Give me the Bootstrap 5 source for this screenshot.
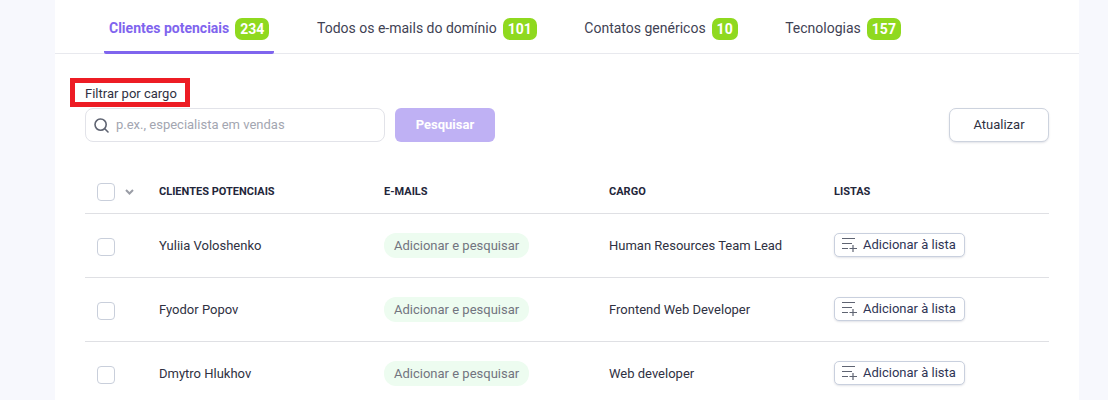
<!DOCTYPE html>
<html lang="pt">
<head>
<meta charset="utf-8">
<title>Clientes potenciais</title>
<link href="https://cdn.jsdelivr.net/npm/bootstrap@5.3.0/dist/css/bootstrap.min.css" rel="stylesheet">
<style>
html,body{height:100vh;overflow:hidden}
body{background:#f7f8fd;font-family:Roboto,"Liberation Sans",sans-serif;font-size:13px;color:#2f3142}
.panel{margin:0 29px 0 55px;background:#fff;height:100vh}
.tabbar{height:54px;border-bottom:1px solid #e8e9ee;padding-left:49px;gap:37.5px}
.tabitem{height:54px;padding:0 5px;display:flex;align-items:center;gap:6px;font-size:14px;color:#3f4254;text-decoration:none;margin-top:1px}
.tabitem.on{color:#7f65ee;font-weight:700;border-bottom:3px solid #7f65ee;border-radius:0 0 2px 2px;padding-top:5px;margin-top:0;width:170px;margin-right:.5px;white-space:nowrap}
.count{background:#8fd91f;color:#fff;font-weight:700;font-size:14px;border-radius:7px;height:22px;padding:0 5px;line-height:22px;margin-top:2px}
.body-area{padding:24px 30px 0}
.jobflag{display:block;width:120px;height:29px;margin-left:-15px;border:5px solid #ed1c24;padding-left:10px;line-height:21px;font-size:13px;color:#2f3142;margin-bottom:1px}
.searchbox{width:300px;height:34px;border:1px solid #e2e3e9;border-radius:8px;padding:0 8px;gap:7px}
.searchbox input{border:0;outline:0;flex:1;font-size:13px;color:#333;padding:0;min-width:0}
.searchbox input::placeholder{color:#a3a6b1;opacity:1}
.go{width:100px;height:34px;background:#bfb1f4;border:0;border-radius:6px;color:#fff;font-weight:700;font-size:13px;padding:0;margin-left:10px}
.refresh{width:100px;height:34px;background:#fff;border:1px solid #cdd3de;border-radius:7px;color:#2f3142;font-size:13px;padding:0;box-shadow:0 1px 2px rgba(60,70,100,.15)}
.leads{table-layout:fixed;width:100%;margin-top:28px;margin-bottom:0;font-size:13px}
.leads th,.leads td{padding:0;vertical-align:middle;border-bottom:1px solid #dfe0e4;color:#2f3142;box-shadow:none}
.leads td{padding-top:2px}
.leads thead tr{height:43px}
.leads thead th{font-size:11px;font-weight:700;text-transform:uppercase;color:#23263a;padding-top:1px}
.leads tbody tr{height:64px}
.leads .c0{width:74px}
.leads .c1,.leads .c2,.leads .c3{width:225px}
.tick{display:inline-block;width:18px;height:18px;border:1px solid #c9cfdb;border-radius:4px;margin-left:12px;vertical-align:middle;background:#fff}
.leads td .findpill{margin-bottom:2px}
.caret{display:inline-block;margin-left:10px;vertical-align:middle}
.findpill{display:inline-block;background:#edfcf0;color:#72747f;border-radius:12px;height:25px;line-height:25px;padding:0 10px}
.addlist{display:inline-flex;align-items:center;gap:6px;width:131px;height:24px;border:1px solid #c9d0de;border-radius:5px;background:#fff;padding:0 0 0 7px;font-size:13px;color:#2f3555;box-shadow:0 1px 2px rgba(60,70,100,.15);margin-top:-2px}
</style>
</head>
<body>
<div class="panel">
  <nav class="tabbar d-flex align-items-start">
    <a class="tabitem on" href="#">Clientes potenciais <span class="count">234</span></a>
    <a class="tabitem" href="#">Todos os e-mails do domínio <span class="count">101</span></a>
    <a class="tabitem" href="#">Contatos genéricos <span class="count">10</span></a>
    <a class="tabitem" href="#">Tecnologias <span class="count">157</span></a>
  </nav>
  <div class="body-area">
    <label class="jobflag" for="job">Filtrar por cargo</label>
    <div class="d-flex align-items-center">
      <div class="searchbox d-flex align-items-center">
        <svg width="15" height="15" viewBox="0 0 15 15" fill="none" stroke="#5f6472" stroke-width="1.6" stroke-linecap="round"><circle cx="6.6" cy="6.6" r="5.6"/><path d="M10.8 10.8 14 14"/></svg>
        <input id="job" type="text" placeholder="p.ex., especialista em vendas">
      </div>
      <button class="btn go" type="button">Pesquisar</button>
      <button class="btn refresh ms-auto" type="button">Atualizar</button>
    </div>
    <table class="table leads">
      <thead>
        <tr>
          <th class="c0"><span class="tick"></span><svg class="caret" width="9" height="6" viewBox="0 0 9 6" fill="none" stroke="#9a9da6" stroke-width="2"><path d="M1 1l3.5 3.5L8 1"/></svg></th>
          <th class="c1">Clientes potenciais</th>
          <th class="c2">E-mails</th>
          <th class="c3">Cargo</th>
          <th>Listas</th>
        </tr>
      </thead>
      <tbody>
        <tr>
          <td><span class="tick"></span></td><td>Yuliia Voloshenko</td><td><span class="findpill">Adicionar e pesquisar</span></td><td>Human Resources Team Lead</td>
          <td><button class="addlist" type="button"><svg width="15" height="15" viewBox="0 0 15 15" fill="none" stroke="#5f6472" stroke-width="1.2"><path d="M0 1.5h13M0 6.5h10M0 11.5h6M11 8v7M7.5 11.5h7.5"/></svg>Adicionar à lista</button></td>
        </tr>
        <tr>
          <td><span class="tick"></span></td><td>Fyodor Popov</td><td><span class="findpill">Adicionar e pesquisar</span></td><td>Frontend Web Developer</td>
          <td><button class="addlist" type="button"><svg width="15" height="15" viewBox="0 0 15 15" fill="none" stroke="#5f6472" stroke-width="1.2"><path d="M0 1.5h13M0 6.5h10M0 11.5h6M11 8v7M7.5 11.5h7.5"/></svg>Adicionar à lista</button></td>
        </tr>
        <tr>
          <td><span class="tick"></span></td><td>Dmytro Hlukhov</td><td><span class="findpill">Adicionar e pesquisar</span></td><td>Web developer</td>
          <td><button class="addlist" type="button"><svg width="15" height="15" viewBox="0 0 15 15" fill="none" stroke="#5f6472" stroke-width="1.2"><path d="M0 1.5h13M0 6.5h10M0 11.5h6M11 8v7M7.5 11.5h7.5"/></svg>Adicionar à lista</button></td>
        </tr>
      </tbody>
    </table>
  </div>
</div>
<script src="https://cdn.jsdelivr.net/npm/bootstrap@5.3.0/dist/js/bootstrap.bundle.min.js"></script>
</body>
</html>
